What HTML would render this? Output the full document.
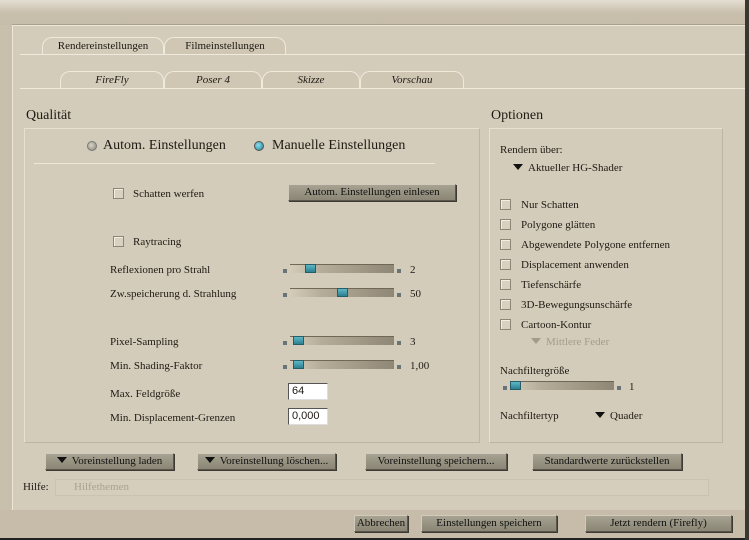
<!DOCTYPE html>
<html><head><meta charset="utf-8"><style>
*{margin:0;padding:0;box-sizing:border-box}
body{width:749px;height:540px;overflow:hidden;background:#c9bfad;font-family:"Liberation Serif",serif;font-size:11px;color:#1e1a14;position:relative}
.a{position:absolute;white-space:nowrap}
#top{left:0;top:0;width:749px;height:25px;background:linear-gradient(#e4ded2,#c9bfad 50%,#c6bca9)}
#panel{left:12px;top:25px;width:733px;height:485px;background:#d4ccba;border-top:1px solid #eee7d8;border-left:1px solid #eee7d8;box-shadow:0 -1px 0 #a9a08e}
#rb{position:absolute;left:745px;top:0;width:4px;height:540px;background:#3a3630}
.box{border:1px solid #e8e1d2;border-right-color:#bdb4a2;border-bottom-color:#bdb4a2}
.tab{position:absolute;height:17px;border:1px solid #f0eadc;border-bottom:none;border-radius:10px 10px 0 0;text-align:center;line-height:16px;background:#d4ccba}
.cb{position:absolute;width:11px;height:11px;border:1px solid #8d8676;background:#d9d1c0;box-shadow:inset 1px 1px 0 #f4eee2}
.btn{position:absolute;height:17px;background:linear-gradient(#a7a291,#8a8574);border:1px solid #5a564b;border-top-color:#d0cbbb;border-left-color:#d0cbbb;box-shadow:1px 1px 0 #3d3a33;text-align:center;line-height:15px;font-size:11px;color:#111;white-space:nowrap}
.trk{position:absolute;width:104px;height:9px;background:linear-gradient(90deg,#d4ccba,#b5ac99 30%,#8f8775);border-top:1px solid #6f6859}
.th{position:absolute;top:-1px;width:11px;height:9px;background:linear-gradient(#5fb8c6,#2b7f90);border:1px solid #235e69}
.m{position:absolute;width:4px;height:4px;background:#6a7478}
.tri{display:inline-block;width:0;height:0;border-left:5px solid transparent;border-right:5px solid transparent;border-top:6px solid #111;margin-right:5px;vertical-align:1px}
.inp{position:absolute;width:40px;height:17px;background:#fff;border:1px solid #555;border-right-color:#ddd;border-bottom-color:#ddd;font-family:"Liberation Sans",sans-serif;font-size:11px;line-height:15px;padding-left:3px}
</style></head><body>
<div class="a" id="top"></div>
<div class="a" id="panel"></div>
<div id="rb"></div>
<div class="a" style="left:20px;top:54px;width:725px;height:1px;background:#f0eadc"></div>
<div class="tab" style="left:42px;top:37px;width:122px">Rendereinstellungen</div>
<div class="tab" style="left:164px;top:37px;width:122px;background:#cfc6b4">Filmeinstellungen</div>
<div class="a" style="left:20px;top:88px;width:725px;height:1px;background:#f0eadc"></div>
<div class="tab" style="left:60px;top:71px;width:104px;font-style:italic">FireFly</div>
<div class="tab" style="left:164px;top:71px;width:98px;font-style:italic;background:#cfc6b4">Poser 4</div>
<div class="tab" style="left:262px;top:71px;width:98px;font-style:italic;background:#cfc6b4">Skizze</div>
<div class="tab" style="left:360px;top:71px;width:104px;font-style:italic;background:#cfc6b4">Vorschau</div>
<div class="a" style="left:26px;top:108px;font-size:14px">Qualität</div>
<div class="a box" style="left:24px;top:128px;width:456px;height:315px"></div>
<div class="a" style="left:87px;top:141px;width:10px;height:10px;border-radius:50%;background:radial-gradient(circle at 40% 40%,#d8d3c8,#8a857a);border:1px solid #777"></div>
<div class="a" style="left:103px;top:138px;font-size:14px">Autom. Einstellungen</div>
<div class="a" style="left:254px;top:141px;width:10px;height:10px;border-radius:50%;background:radial-gradient(circle at 40% 40%,#8fe0ee,#1a7f95);border:1px solid #555"></div>
<div class="a" style="left:272px;top:138px;font-size:14px">Manuelle Einstellungen</div>
<div class="a" style="left:34px;top:163px;width:401px;height:1px;background:#bab19f;border-bottom:1px solid #eee7d8"></div>
<div class="cb" style="left:113px;top:188px"></div><div class="a" style="left:133px;top:188px">Schatten werfen</div>
<div class="btn" style="left:288px;top:184px;width:168px">Autom. Einstellungen einlesen</div>
<div class="cb" style="left:113px;top:236px"></div><div class="a" style="left:133px;top:236px">Raytracing</div>
<div class="a" style="left:110px;top:264px">Reflexionen pro Strahl</div>
<div class="a" style="left:110px;top:288px">Zw.speicherung d. Strahlung</div>
<div class="a" style="left:110px;top:336px">Pixel-Sampling</div>
<div class="a" style="left:110px;top:360px">Min. Shading-Faktor</div>
<div class="a" style="left:110px;top:388px">Max. Feldgröße</div>
<div class="a" style="left:110px;top:412px">Min. Displacement-Grenzen</div>
<div class="m" style="left:283px;top:269px"></div><div class="trk" style="left:290px;top:264px"><div class="th" style="left:15px"></div></div><div class="m" style="left:397px;top:269px"></div><div class="a" style="left:410px;top:264px">2</div>
<div class="m" style="left:283px;top:293px"></div><div class="trk" style="left:290px;top:288px"><div class="th" style="left:47px"></div></div><div class="m" style="left:397px;top:293px"></div><div class="a" style="left:410px;top:288px">50</div>
<div class="m" style="left:283px;top:341px"></div><div class="trk" style="left:290px;top:336px"><div class="th" style="left:3px"></div></div><div class="m" style="left:397px;top:341px"></div><div class="a" style="left:410px;top:336px">3</div>
<div class="m" style="left:283px;top:365px"></div><div class="trk" style="left:290px;top:360px"><div class="th" style="left:3px"></div></div><div class="m" style="left:397px;top:365px"></div><div class="a" style="left:410px;top:360px">1,00</div>
<div class="inp" style="left:288px;top:383px">64</div>
<div class="inp" style="left:288px;top:408px">0,000</div>
<div class="a" style="left:491px;top:108px;font-size:14px">Optionen</div>
<div class="a box" style="left:489px;top:128px;width:234px;height:315px"></div>
<div class="a" style="left:500px;top:144px">Rendern über:</div>
<div class="a" style="left:513px;top:162px"><span class="tri"></span>Aktueller HG-Shader</div>
<div class="cb" style="left:500px;top:199px"></div><div class="a" style="left:521px;top:199px">Nur Schatten</div>
<div class="cb" style="left:500px;top:219px"></div><div class="a" style="left:521px;top:219px">Polygone glätten</div>
<div class="cb" style="left:500px;top:239px"></div><div class="a" style="left:521px;top:239px">Abgewendete Polygone entfernen</div>
<div class="cb" style="left:500px;top:259px"></div><div class="a" style="left:521px;top:259px">Displacement anwenden</div>
<div class="cb" style="left:500px;top:279px"></div><div class="a" style="left:521px;top:279px">Tiefenschärfe</div>
<div class="cb" style="left:500px;top:299px"></div><div class="a" style="left:521px;top:299px">3D-Bewegungsunschärfe</div>
<div class="cb" style="left:500px;top:319px"></div><div class="a" style="left:521px;top:319px">Cartoon-Kontur</div>
<div class="a" style="left:531px;top:336px;color:#a39b8b"><span class="tri" style="border-top-color:#a39b8b"></span>Mittlere Feder</div>
<div class="a" style="left:500px;top:365px">Nachfiltergröße</div>
<div class="m" style="left:503px;top:386px"></div><div class="trk" style="left:510px;top:381px"><div class="th" style="left:0px"></div></div><div class="m" style="left:617px;top:386px"></div><div class="a" style="left:629px;top:381px">1</div>
<div class="a" style="left:500px;top:410px">Nachfiltertyp</div>
<div class="a" style="left:595px;top:410px"><span class="tri"></span>Quader</div>
<div class="btn" style="left:45px;top:453px;width:129px"><span class="tri"></span>Voreinstellung laden</div>
<div class="btn" style="left:197px;top:453px;width:139px"><span class="tri"></span>Voreinstellung löschen...</div>
<div class="btn" style="left:365px;top:453px;width:142px">Voreinstellung speichern...</div>
<div class="btn" style="left:532px;top:453px;width:150px">Standardwerte zurückstellen</div>
<div class="a" style="left:23px;top:481px">Hilfe:</div>
<div class="a" style="left:55px;top:479px;width:654px;height:17px;border:1px solid #cbc2b0;background:#d6cebd;color:#aaa292;padding-left:18px;line-height:15px">Hilfethemen</div>
<div class="a" style="left:0;top:510px;width:745px;height:30px;background:#c6bca9"></div>
<div class="a" style="left:0;top:538px;width:745px;height:2px;background:#222"></div>
<div class="btn" style="left:354px;top:515px;width:54px">Abbrechen</div>
<div class="btn" style="left:421px;top:515px;width:136px">Einstellungen speichern</div>
<div class="btn" style="left:585px;top:515px;width:147px">Jetzt rendern (Firefly)</div>
</body></html>
